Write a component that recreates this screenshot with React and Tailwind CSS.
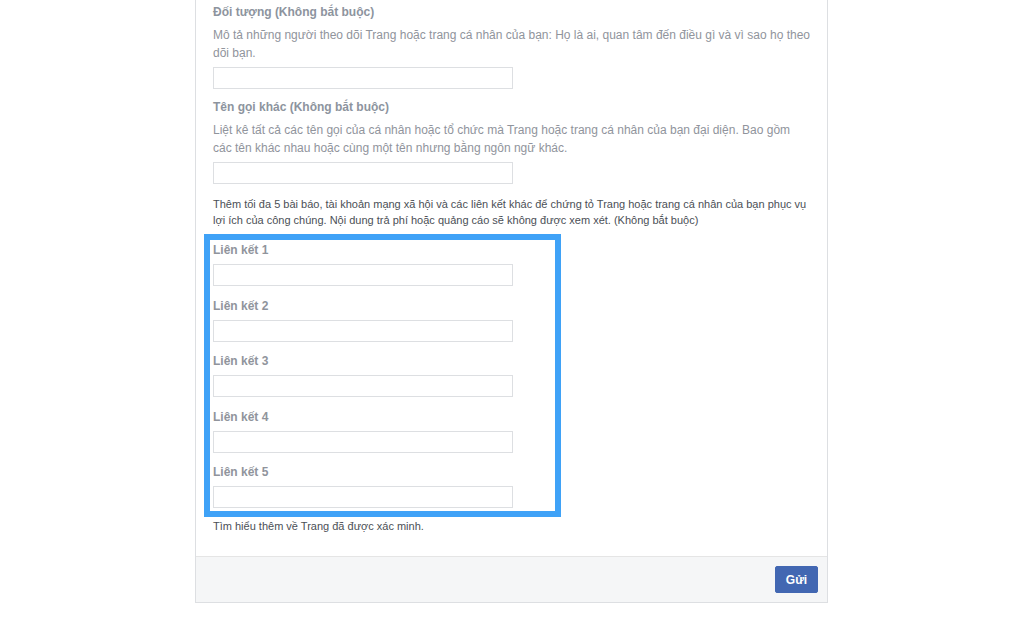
export default function App() {
    const links = [1, 2, 3, 4, 5]
    return (
        <div className="min-h-[627px] w-full bg-white text-[12px] font-['Liberation_Sans',Arial,sans-serif]">
            <div className="ml-[195px] w-[633px] border-x border-b border-[#dddfe2] bg-white">
                <div className="pl-[17px] pr-[16px] pt-[4px] pb-[22px]">
                    <div className="font-bold leading-4 text-[#8d949e]">Đối tượng (Không bắt buộc)</div>
                    <p className="mt-[6px] leading-[18px] text-[#90949c]">
                        Mô tả những người theo dõi Trang hoặc trang cá nhân của bạn: Họ là ai, quan tâm đến điều gì và vì sao họ theo dõi bạn.
                    </p>
                    <input type="text" className="mt-[5px] block h-[22px] w-[300px] border border-[#dddfe2] bg-white outline-none" />

                    <div className="mt-[10px] font-bold leading-4 text-[#8d949e]">Tên gọi khác (Không bắt buộc)</div>
                    <p className="mt-[6px] leading-[18px] text-[#90949c]">
                        Liệt kê tất cả các tên gọi của cá nhân hoặc tổ chức mà Trang hoặc trang cá nhân của bạn đại diện. Bao gồm các tên khác nhau hoặc cùng một tên nhưng bằng ngôn ngữ khác.
                    </p>
                    <input type="text" className="mt-[5px] block h-[22px] w-[300px] border border-[#dddfe2] bg-white outline-none" />

                    <p className="mt-[12px] text-[11px] leading-4 text-[#4b4f56]">
                        Thêm tối đa 5 bài báo, tài khoản mạng xã hội và các liên kết khác để chứng tỏ Trang hoặc trang cá nhân của bạn phục vụ lợi ích của công chúng. Nội dung trả phí hoặc quảng cáo sẽ không được xem xét. (Không bắt buộc)
                    </p>

                    <div className="relative mt-[14px]">
                        {links.map((n) => (
                            <div key={n} className={n > 1 ? "mt-[11.5px]" : ""}>
                                <div className="font-bold leading-4 text-[#90949c]">Liên kết {n}</div>
                                <input type="text" className="mt-[6px] block h-[22px] w-[300px] border border-[#dddfe2] bg-white outline-none" />
                            </div>
                        ))}
                        <div className="pointer-events-none absolute -top-[8px] -bottom-[9px] -left-[9px] w-[357px] border-[6px] border-[#3fa2f7]"></div>
                    </div>

                    <p className="mt-[10px] text-[11px] leading-4 text-[#4b4f56]">Tìm hiểu thêm về Trang đã được xác minh.</p>
                </div>
                <div className="flex h-[46px] items-center justify-end border-t border-[#e5e5e5] bg-[#f5f6f7] pr-[9px]">
                    <button className="h-[27px] w-[43px] rounded-[2px] border border-[#4267b2] bg-[#4267b2] font-bold text-white">Gửi</button>
                </div>
            </div>
        </div>
    )
}
